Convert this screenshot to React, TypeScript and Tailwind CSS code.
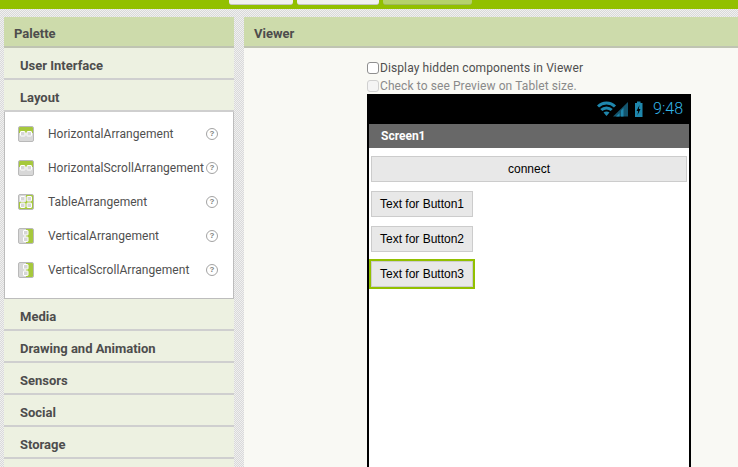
import type { ReactNode } from 'react'

const collapsedTop = ['User Interface', 'Layout']
const collapsedBottom = ['Media', 'Drawing and Animation', 'Sensors', 'Social', 'Storage']

type IconKind = 'horizontal' | 'table' | 'vertical'

const layoutItems: { name: string; icon: IconKind }[] = [
  { name: 'HorizontalArrangement', icon: 'horizontal' },
  { name: 'HorizontalScrollArrangement', icon: 'horizontal' },
  { name: 'TableArrangement', icon: 'table' },
  { name: 'VerticalArrangement', icon: 'vertical' },
  { name: 'VerticalScrollArrangement', icon: 'vertical' },
]

function ArrangementIcon({ kind }: { kind: IconKind }) {
  const box = (x: number, y: number, w = 5, h = 5) => (
    <rect x={x} y={y} width={w} height={h} rx="0.5" fill="#d6d6d6" stroke="#fff" strokeWidth="1" />
  )
  return (
    <svg width="16" height="16" viewBox="0 0 16 16" className="shrink-0">
      <rect x="0.5" y="0.5" width="15" height="15" rx="1.5" fill="#d8d8d8" stroke="#b9b9b9" />
      {kind === 'horizontal' && <path d="M1 2a1 1 0 0 1 1-1h12a1 1 0 0 1 1 1v5H1z" fill="#a6c83c" />}
      {kind === 'table' && (
        <path d="M1 8h7V1h6a1 1 0 0 1 1 1v12a1 1 0 0 1-1 1H2a1 1 0 0 1-1-1z" fill="#a6c83c" />
      )}
      {kind === 'vertical' && <path d="M8 1h6a1 1 0 0 1 1 1v12a1 1 0 0 1-1 1H8z" fill="#a6c83c" />}
      {kind === 'horizontal' && (
        <>
          {box(2.5, 5.5, 4.5, 4.5)}
          {box(9, 5.5, 4.5, 4.5)}
        </>
      )}
      {kind === 'table' && (
        <>
          {box(2.5, 2.5, 4.5, 4.5)}
          {box(9, 2.5, 4.5, 4.5)}
          {box(2.5, 9, 4.5, 4.5)}
          {box(9, 9, 4.5, 4.5)}
        </>
      )}
      {kind === 'vertical' && (
        <>
          {box(5.5, 2.5, 4.5, 4.5)}
          {box(5.5, 9, 4.5, 4.5)}
        </>
      )}
    </svg>
  )
}

function HelpIcon() {
  return (
    <span className="w-3 h-3 mb-px shrink-0 rounded-full border border-[#a3a3a3] flex items-center justify-center font-['Liberation_Sans',sans-serif] text-[8px] font-bold leading-none text-[#7d7d7d]">
      ?
    </span>
  )
}

function Section({ children }: { children: ReactNode }) {
  return (
    <div className="h-8 shrink-0 flex items-center pl-4 pt-[5px] bg-[#edf1e1] border-b-2 border-[#cfcfcf] text-[13px] font-bold text-[#4d4d4d]">
      {children}
    </div>
  )
}

function PhoneButton({ label }: { label: string }) {
  return (
    <div className="w-[102px] h-[26px] flex items-center justify-center bg-[#e8e8e8] border border-[#cccccc] text-[12px] text-black font-['Liberation_Sans',sans-serif]">
      {label}
    </div>
  )
}

function StatusIcons() {
  return (
    <svg width="50" height="18" viewBox="0 0 50 18">
      <path d="M1 6.500a12 12 0 0 1 17 0" fill="none" stroke="#1f87ad" strokeWidth="3" />
      <path d="M4.300 10a7.500 7.500 0 0 1 10.400 0" fill="none" stroke="#1f87ad" strokeWidth="3" />
      <path d="M9.500 16l-3-3.500c1.800-1.400 4.200-1.400 6 0z" fill="#1f87ad" />
      <path d="M16 16.500L31 2v14.500z" fill="#14556e" />
      <path d="M19 16.500l3.500-3.500v3.500zM24 16.500v-6l2.500-2.500v8.500z" fill="#1f87ad" />
      <path d="M38 3h2V1.500h3.500V3h2v14H38z" fill="#1f87ad" />
      <path d="M42.500 5l-3 6h1.700l-.7 4 3-6h-1.700z" fill="#000" />
    </svg>
  )
}

export default function App() {
  return (
    <div className="w-[738px] h-[467px] overflow-hidden flex flex-col font-['Roboto',sans-serif] bg-[#e6e6e6] bg-[repeating-conic-gradient(#d9d9d9_0_25%,#f0f0f0_0_50%)] bg-[length:2px_2px]">
      {/* Top green toolbar, only its lower edge is in frame */}
      <div className="h-[9px] shrink-0 bg-[#92c000] flex items-start pl-[229px] gap-1">
        <div className="w-[64px] h-[5px] bg-[#f0f0f0] border-b border-[#c4c4c4] rounded-b-[3px]" />
        <div className="w-[82px] h-[5px] bg-[#f0f0f0] border-b border-[#c4c4c4] rounded-b-[3px]" />
        <div className="w-[89px] h-[5px] bg-[#b5d26b] border-b border-[#9fb860] rounded-b-[3px]" />
      </div>

      <div className="flex-1 min-h-0 flex pt-2 pl-1 gap-[10px]">
        {/* Palette */}
        <div className="w-[230px] shrink-0 flex flex-col">
          <div className="h-[31px] shrink-0 flex items-center pl-[10px] pt-[5px] bg-[#cddbab] border-b-2 border-[#bfc4b2] text-[13px] font-bold text-[#4d4d4d]">
            Palette
          </div>
          {collapsedTop.map(name => (
            <Section key={name}>{name}</Section>
          ))}
          <div className="h-[187px] shrink-0 pt-[5px] bg-white border-x border-b border-[#bdbdbd] flex flex-col">
            {layoutItems.map(item => (
              <div key={item.name} className="h-[34px] shrink-0 flex items-center pl-[13px] pr-[15px]">
                <ArrangementIcon kind={item.icon} />
                <span className="ml-[14px] flex-1 whitespace-nowrap text-[12px] tracking-[0.05px] text-[#4f4f4f]">
                  {item.name}
                </span>
                <HelpIcon />
              </div>
            ))}
          </div>
          {collapsedBottom.map(name => (
            <Section key={name}>{name}</Section>
          ))}
          <div className="flex-1 bg-[#edf1e1]" />
        </div>

        {/* Viewer */}
        <div className="flex-1 min-w-0 flex flex-col">
          <div className="h-[31px] shrink-0 flex items-center pl-[10px] pt-[5px] bg-[#cddbab] border-b-2 border-[#bfc4b2] text-[13px] font-bold text-[#4d4d4d]">
            Viewer
          </div>
          <div className="flex-1 min-h-0 bg-[#f9f9f4] pl-[123px] pt-[10px] flex flex-col">
            <div className="h-[19px] shrink-0 flex items-center text-[12px] tracking-[0.1px] text-[#4f4f4f]">
              <span className="w-3 h-3 mr-px rounded-[3px] border border-[#8f8f8f] bg-white" />
              Display hidden components in Viewer
            </div>
            <div className="h-[17px] shrink-0 flex items-center text-[12px] tracking-[0.1px] text-[#8a8a8a]">
              <span className="w-3 h-3 mr-px rounded-[3px] border border-[#d0d0d0] bg-[#f4f4f4]" />
              Check to see Preview on Tablet size.
            </div>

            {/* Phone frame */}
            <div className="w-[324px] flex-1 bg-white border-x-2 border-[#000000] flex flex-col">
              <div className="h-[30px] shrink-0 bg-black flex items-center justify-end pr-[6px] gap-[6px]">
                <StatusIcons />
                <span className="text-[16px] font-light text-[#33b5e5]">9:48</span>
              </div>
              <div className="h-6 shrink-0 bg-[#686868] flex items-center pl-3 pb-px text-[12px] font-bold text-white">
                Screen1
              </div>
              <div className="flex flex-col pt-2 pl-[2px] pr-[2px]">
                <div className="h-[26px] flex items-center justify-center bg-[#e8e8e8] border border-[#cccccc] text-[12px] text-black font-['Liberation_Sans',sans-serif]">
                  connect
                </div>
                <div className="mt-[9px]">
                  <PhoneButton label="Text for Button1" />
                </div>
                <div className="mt-[9px]">
                  <PhoneButton label="Text for Button2" />
                </div>
                <div className="mt-[7px] -ml-[2px] w-[106px] border-2 border-[#92c000]">
                  <PhoneButton label="Text for Button3" />
                </div>
              </div>
            </div>
          </div>
        </div>
      </div>
    </div>
  )
}
